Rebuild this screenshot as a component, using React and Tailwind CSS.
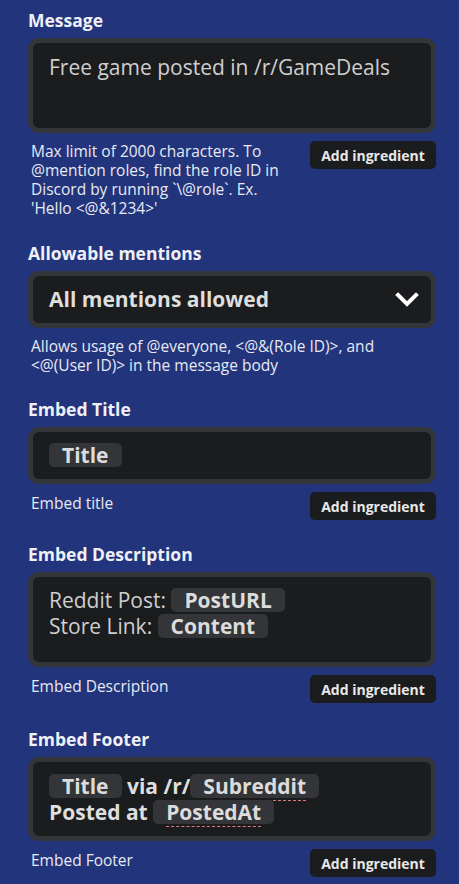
const font = { fontFamily: '"Open Sans", Lato, sans-serif' };

const Pill = ({ children, dashed }) => (
  <span className="inline-block rounded-[5px] bg-[#333538] px-[13px] leading-[24px] font-bold text-[#dcdcdc]">
    <span className={dashed ? 'border-b border-dashed border-[#e07a7a]' : ''}>{children}</span>
  </span>
);

const AddButton = () => (
  <button className="shrink-0 w-[126px] rounded-[5px] bg-[#1b1c1e] h-[28px] text-[14px] font-bold text-[#e8e8e8]">
    Add ingredient
  </button>
);

const Label = ({ children }) => (
  <div className="text-[17.5px] font-bold text-[#eef0f6] leading-[22px] mb-[7px]">{children}</div>
);

const Box = ({ children, className }) => (
  <div className={`rounded-[11px] border-[5px] border-[#333538] bg-[#1b1c1e] px-[16px] ${className}`}>{children}</div>
);

const Helper = ({ children }) => (
  <div className="text-[15.5px] leading-[19px] text-[#e8eaf2] pl-[3px]">{children}</div>
);

export default function App() {
  return (
    <div style={font} className="min-h-[884px] w-[459px] bg-[#22347c] pl-[28px] pr-[23px] pt-[9px] pb-4">
      {/* Message */}
      <Label>Message</Label>
      <Box className="h-[95px] pt-[10px]">
        <div className="text-[21px] leading-[28px] text-[#cfcfcf]">Free game posted in /r/GameDeals</div>
      </Box>
      <div className="mt-[8px] flex items-start justify-between">
        <div className="w-[272px] mt-[1px]">
          <Helper>Max limit of 2000 characters. To @mention roles, find the role ID in Discord by running `\@role`. Ex. 'Hello &lt;@&amp;1234&gt;'</Helper>
        </div>
        <AddButton />
      </div>

      {/* Allowable mentions */}
      <div className="mt-[24px]">
        <Label>Allowable mentions</Label>
        <Box className="h-[57px] flex items-center justify-between pr-[12px]">
          <span className="text-[21px] font-bold text-[#dedede]">All mentions allowed</span>
          <svg width="24" height="16" viewBox="0 0 24 16" className="text-white">
            <path d="M3 3 L12 12 L21 3" fill="none" stroke="currentColor" strokeWidth="4" strokeLinecap="square" />
          </svg>
        </Box>
        <div className="mt-[9px] w-[370px]">
          <Helper>Allows usage of @everyone, &lt;@&amp;(Role ID)&gt;, and &lt;@(User ID)&gt; in the message body</Helper>
        </div>
      </div>

      {/* Embed Title */}
      <div className="mt-[23px]">
        <Label>Embed Title</Label>
        <Box className="h-[57px] flex items-center">
          <span className="text-[21px]"><Pill>Title</Pill></span>
        </Box>
        <div className="mt-[8px] flex items-start justify-between">
          <div className="mt-[2px]"><Helper>Embed title</Helper></div>
          <AddButton />
        </div>
      </div>

      {/* Embed Description */}
      <div className="mt-[23px]">
        <Label>Embed Description</Label>
        <Box className="h-[95px] pt-[10px]">
          <div className="text-[21px] leading-[26px] text-[#cfcfcf]">
            <div>Reddit Post: <Pill>PostURL</Pill></div>
            <div>Store Link: <Pill>Content</Pill></div>
          </div>
        </Box>
        <div className="mt-[8px] flex items-start justify-between">
          <div className="mt-[2px]"><Helper>Embed Description</Helper></div>
          <AddButton />
        </div>
      </div>

      {/* Embed Footer */}
      <div className="mt-[25px]">
        <Label>Embed Footer</Label>
        <Box className="h-[84px] pt-[11px]">
          <div className="text-[21px] leading-[26px] font-bold text-[#dedede]">
            <div><Pill>Title</Pill> via /r/<Pill dashed>Subreddit</Pill></div>
            <div>Posted at <Pill dashed>PostedAt</Pill></div>
          </div>
        </Box>
        <div className="mt-[8px] flex items-start justify-between">
          <div className="mt-[2px]"><Helper>Embed Footer</Helper></div>
          <AddButton />
        </div>
      </div>
    </div>
  );
}
